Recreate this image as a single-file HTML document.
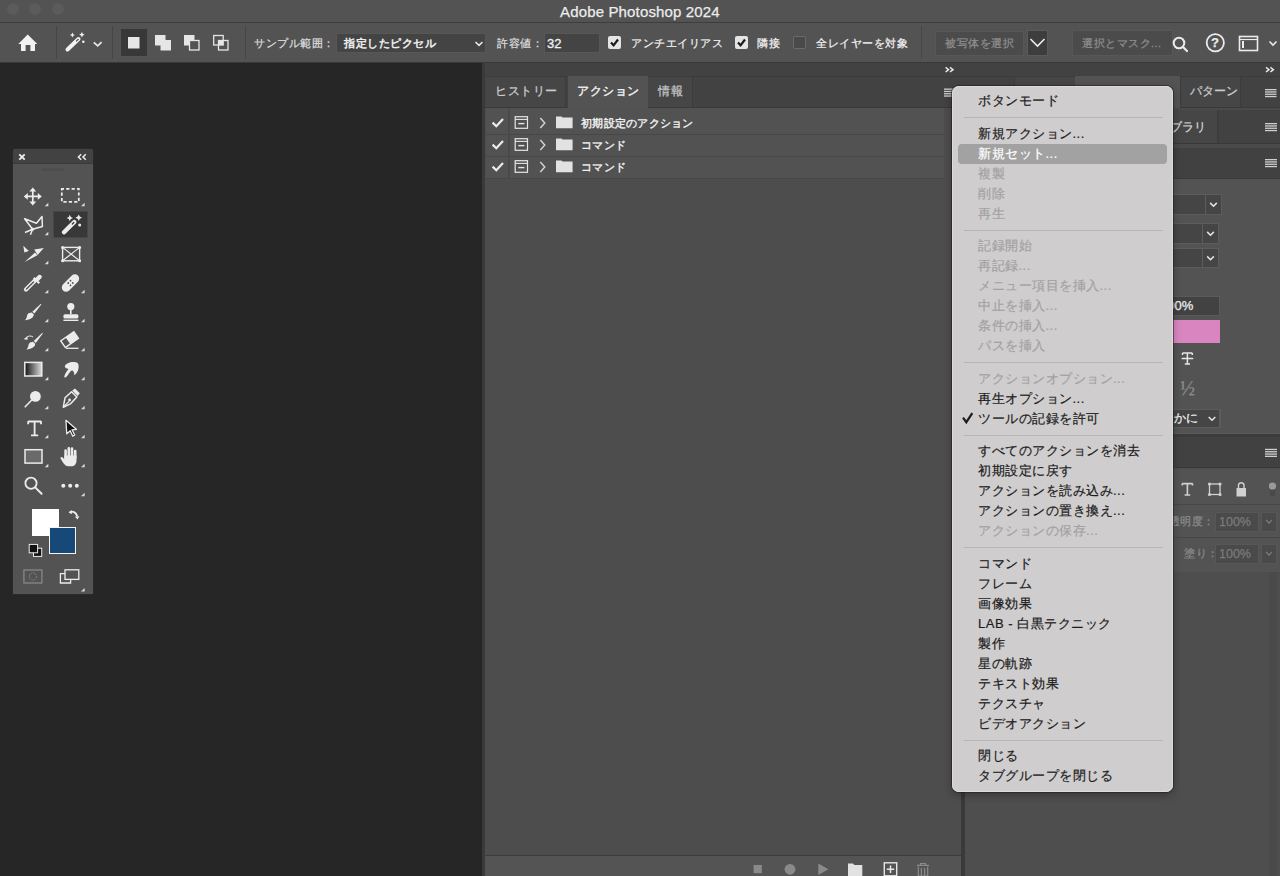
<!DOCTYPE html>
<html><head><meta charset="utf-8">
<style>
*{box-sizing:border-box;margin:0;padding:0}
html,body{width:1280px;height:876px;overflow:hidden;background:#262626;font-family:"Liberation Sans",sans-serif;color:#e6e6e6}
.a{position:absolute}
.t{position:absolute;white-space:nowrap;line-height:1;-webkit-text-stroke:0.25px currentColor}
.mi{left:978px;font-size:13px;letter-spacing:0.5px;-webkit-text-stroke:0.2px currentColor}
svg{position:absolute;overflow:visible}
</style></head><body>

<!-- TITLE BAR -->
<div class="a" style="left:0;top:0;width:1280px;height:23px;background:#535353"></div>
<div class="a" style="left:0;top:22px;width:1280px;height:1px;background:#3d3d3d"></div>
<div class="a" style="left:7px;top:3px;width:12px;height:12px;border-radius:50%;background:#5b5b5b"></div>
<div class="a" style="left:29px;top:3px;width:12px;height:12px;border-radius:50%;background:#5b5b5b"></div>
<div class="a" style="left:52px;top:3px;width:12px;height:12px;border-radius:50%;background:#5b5b5b"></div>
<div class="t" style="left:560px;top:4px;font-size:15px;letter-spacing:0.15px;color:#ececec">Adobe Photoshop 2024</div>

<!-- OPTIONS BAR -->
<div class="a" id="opt" style="left:0;top:23px;width:1280px;height:39px;background:#535353"></div>
<div class="a" style="left:0;top:62px;width:1280px;height:1px;background:#383838"></div>


<!-- options bar content -->
<svg style="left:0;top:0" width="1280" height="62">
 <path d="M27.7 34.5 L18.3 44 L21 44 L21 51 L25.6 51 L25.6 45 L30.4 45 L30.4 51 L35 51 L35 44 L37.3 44 Z" fill="#f2f2f2"/>
 <line x1="56.5" y1="26" x2="56.5" y2="59" stroke="#464646" stroke-width="1"/>
 <line x1="67.5" y1="49.5" x2="78.5" y2="39" stroke="#f2f2f2" stroke-width="4" stroke-linecap="round"/>
 <line x1="76.5" y1="41" x2="78.3" y2="39.3" stroke="#535353" stroke-width="1.2" stroke-linecap="round"/>
 <path d="M72.4 32.5 L73.2 34.2 L74.9 35 L73.2 35.8 L72.4 37.5 L71.6 35.8 L69.9 35 L71.6 34.2Z" fill="#f2f2f2"/>
 <path d="M81.9 32 L82.8 33.8 L84.6 34.7 L82.8 35.6 L81.9 37.4 L81 35.6 L79.2 34.7 L81 33.8Z" fill="#f2f2f2"/>
 <circle cx="83.3" cy="41.7" r="1.3" fill="#f2f2f2"/>
 <polyline points="93.8,42.3 97.7,45.8 101.6,42.1" fill="none" stroke="#e8e8e8" stroke-width="1.8"/>
 <line x1="112.5" y1="26" x2="112.5" y2="59" stroke="#464646" stroke-width="1"/>
 <rect x="121" y="29" width="26" height="27" fill="#383838"/>
 <rect x="128" y="37" width="11.5" height="11.5" fill="#e6e6e6"/>
 <rect x="155" y="35" width="10.5" height="10.5" fill="#e6e6e6"/>
 <rect x="160.5" y="40" width="10.5" height="10.5" fill="#e6e6e6"/>
 <rect x="184" y="35" width="10.5" height="10.5" fill="#e6e6e6"/>
 <rect x="189.5" y="40.5" width="9.5" height="9.5" fill="#535353" stroke="#e6e6e6" stroke-width="1.3"/>
 <rect x="213.7" y="35.5" width="9.5" height="9.5" fill="none" stroke="#e6e6e6" stroke-width="1.3"/>
 <rect x="218.5" y="40.5" width="9.5" height="9.5" fill="none" stroke="#e6e6e6" stroke-width="1.3"/>
 <rect x="218.5" y="40.5" width="4.7" height="4.5" fill="#e6e6e6"/>
 <line x1="245.5" y1="26" x2="245.5" y2="59" stroke="#464646" stroke-width="1"/>
 <line x1="921.5" y1="26" x2="921.5" y2="59" stroke="#464646" stroke-width="1"/>
</svg>
<div class="t" style="left:254px;top:38px;font-size:11px;letter-spacing:0.5px;color:#dcdcdc">サンプル範囲：</div>
<div class="a" style="left:336px;top:33px;width:150px;height:20px;background:#444;border:1px solid #575757"></div>
<div class="t" style="left:344px;top:38px;font-size:11px;letter-spacing:0.5px;color:#f0f0f0;-webkit-text-stroke:0.5px currentColor">指定したピクセル</div>
<svg style="left:0;top:0" width="1" height="1"><polyline points="475.5,42 479,45.3 482.5,42" fill="none" stroke="#e8e8e8" stroke-width="1.6"/></svg>
<div class="t" style="left:497px;top:38px;font-size:11px;letter-spacing:0.5px;color:#dcdcdc">許容値：</div>
<div class="a" style="left:544px;top:33px;width:56px;height:20px;background:#444;border:1px solid #575757"></div>
<div class="t" style="left:547px;top:37px;font-size:13px;color:#f2f2f2;-webkit-text-stroke:0.3px currentColor">32</div>
<div class="a" style="left:608px;top:36px;width:13px;height:13px;background:#e4e4e4;border-radius:2px"></div>
<svg style="left:0;top:0" width="1" height="1"><polyline points="611,42.5 613.6,45.3 618,39.5" fill="none" stroke="#1a1a1a" stroke-width="2.2"/></svg>
<div class="t" style="left:631px;top:38px;font-size:11px;letter-spacing:0.5px;color:#f0f0f0">アンチエイリアス</div>
<div class="a" style="left:735px;top:36px;width:13px;height:13px;background:#e4e4e4;border-radius:2px"></div>
<svg style="left:0;top:0" width="1" height="1"><polyline points="738,42.5 740.6,45.3 745,39.5" fill="none" stroke="#1a1a1a" stroke-width="2.2"/></svg>
<div class="t" style="left:757px;top:38px;font-size:11px;letter-spacing:0.5px;color:#f0f0f0">隣接</div>
<div class="a" style="left:793px;top:36px;width:13px;height:13px;background:#4a4a4a;border:1px solid #6a6a6a;border-radius:2px"></div>
<div class="t" style="left:816px;top:38px;font-size:11px;letter-spacing:0.5px;color:#f0f0f0">全レイヤーを対象</div>
<div class="a" style="left:935px;top:31px;width:89px;height:25px;background:#4b4b4b;border:1px solid #575757"></div>
<div class="t" style="left:945px;top:38px;font-size:11px;letter-spacing:0.5px;color:#8e8e8e">被写体を選択</div>
<div class="a" style="left:1027px;top:30px;width:21px;height:26px;background:#3d3d3d;border:1px solid #5a5a5a"></div>
<svg style="left:0;top:0" width="1" height="1"><polyline points="1030.5,39 1037.5,46 1044.5,39" fill="none" stroke="#ececec" stroke-width="1.6"/></svg>
<div class="a" style="left:1072px;top:30px;width:101px;height:26px;background:#4b4b4b;border:1px solid #575757"></div>
<div class="t" style="left:1082px;top:38px;font-size:11px;letter-spacing:0.5px;color:#8e8e8e">選択とマスク...</div>
<svg style="left:0;top:0" width="1" height="1">
 <circle cx="1179" cy="43" r="5.3" fill="none" stroke="#ececec" stroke-width="2"/>
 <line x1="1183" y1="47" x2="1187" y2="51" stroke="#ececec" stroke-width="2.2" stroke-linecap="round"/>
 <circle cx="1215.3" cy="42.8" r="8.6" fill="none" stroke="#ececec" stroke-width="1.8"/>
 <rect x="1239.5" y="36.5" width="18" height="14" fill="none" stroke="#ececec" stroke-width="1.6"/>
 <line x1="1239.5" y1="39.5" x2="1257.5" y2="39.5" stroke="#ececec" stroke-width="1.2"/>
 <line x1="1243" y1="41" x2="1243" y2="48" stroke="#ececec" stroke-width="2"/>
 <polyline points="1269.5,41.5 1273,45 1276.5,41.5" fill="none" stroke="#e8e8e8" stroke-width="1.6"/>
</svg>
<div class="t" style="left:1211px;top:36px;font-size:13px;color:#ececec;font-weight:bold">?</div>

<!-- CANVAS AREA -->
<div class="a" style="left:0;top:63px;width:482px;height:813px;background:#262626"></div>

<!-- TOOLBAR -->
<div class="a" style="left:13px;top:149px;width:80px;height:445px;background:#535353;border-radius:3px 3px 0 0;box-shadow:0 0 0 1px #2a2a2a"></div>
<div class="a" style="left:13px;top:149px;width:80px;height:14px;background:#424242;border-radius:3px 3px 0 0"></div>
<div class="a" style="left:13px;top:163px;width:80px;height:1px;background:#3a3a3a"></div>
<svg style="left:0;top:0" width="1" height="1">
<path d="M19.3 154.3 L24.7 159.7 M24.7 154.3 L19.3 159.7" stroke="#ececec" stroke-width="1.9"/>
<path d="M81.2 154.2 L78.4 157 L81.2 159.8 M85.8 154.2 L83 157 L85.8 159.8" fill="none" stroke="#ececec" stroke-width="1.5"/>
<rect x="42" y="168.5" width="22" height="2.5" fill="#4d4d4d"/>
<path d="M48.3 206.3 L48.3 202.70000000000002 L44.699999999999996 206.3Z" fill="#dcdcdc"/>
<path d="M84.6 206.3 L84.6 202.70000000000002 L81.0 206.3Z" fill="#dcdcdc"/>
<path d="M48.3 235.3 L48.3 231.70000000000002 L44.699999999999996 235.3Z" fill="#dcdcdc"/>
<path d="M84.6 235.3 L84.6 231.70000000000002 L81.0 235.3Z" fill="#dcdcdc"/>
<path d="M48.3 264.3 L48.3 260.7 L44.699999999999996 264.3Z" fill="#dcdcdc"/>
<path d="M48.3 293.3 L48.3 289.7 L44.699999999999996 293.3Z" fill="#dcdcdc"/>
<path d="M84.6 293.3 L84.6 289.7 L81.0 293.3Z" fill="#dcdcdc"/>
<path d="M48.3 322.3 L48.3 318.7 L44.699999999999996 322.3Z" fill="#dcdcdc"/>
<path d="M84.6 322.3 L84.6 318.7 L81.0 322.3Z" fill="#dcdcdc"/>
<path d="M48.3 351.3 L48.3 347.7 L44.699999999999996 351.3Z" fill="#dcdcdc"/>
<path d="M84.6 351.3 L84.6 347.7 L81.0 351.3Z" fill="#dcdcdc"/>
<path d="M48.3 380.3 L48.3 376.7 L44.699999999999996 380.3Z" fill="#dcdcdc"/>
<path d="M84.6 380.3 L84.6 376.7 L81.0 380.3Z" fill="#dcdcdc"/>
<path d="M48.3 409.3 L48.3 405.7 L44.699999999999996 409.3Z" fill="#dcdcdc"/>
<path d="M84.6 409.3 L84.6 405.7 L81.0 409.3Z" fill="#dcdcdc"/>
<path d="M48.3 438.3 L48.3 434.7 L44.699999999999996 438.3Z" fill="#dcdcdc"/>
<path d="M84.6 438.3 L84.6 434.7 L81.0 438.3Z" fill="#dcdcdc"/>
<path d="M48.3 467.3 L48.3 463.7 L44.699999999999996 467.3Z" fill="#dcdcdc"/>
<path d="M84.6 467.3 L84.6 463.7 L81.0 467.3Z" fill="#dcdcdc"/>
<path d="M84.6 496.3 L84.6 492.7 L81.0 496.3Z" fill="#dcdcdc"/>
<path d="M84.6 591.5 L84.6 587.9 L81.0 591.5Z" fill="#dcdcdc"/>
<path d="M32.8 189 V203.8 M25.4 196.4 H40.2" stroke="#ececec" stroke-width="1.7"/>
<path d="M32.8 187.4 L36.2 191.4 H29.4Z M32.8 205.4 L36.2 201.4 H29.4Z M23.8 196.4 L27.8 193 V199.8Z M41.8 196.4 L37.8 193 V199.8Z" fill="#ececec"/>
<rect x="61.8" y="188.8" width="17" height="13" fill="none" stroke="#ececec" stroke-width="1.8" stroke-dasharray="3.2 2.2" stroke-dashoffset="1"/>
<path d="M24.6 218.7 L36.5 223.2 L42 216.6 L42.4 226.5 L32.6 229.3 Z" fill="none" stroke="#ececec" stroke-width="1.5" stroke-linejoin="round"/>
<path d="M32.6 229.3 L25 232.5 M32.6 229.3 L30.4 234.8" stroke="#ececec" stroke-width="1.5"/>
<circle cx="32.4" cy="229.3" r="1.7" fill="#ececec"/>
</svg>
<div class="a" style="left:53px;top:211px;width:35px;height:27px;background:#383838;box-shadow:inset 0 0 0 1px #474747"></div>
<svg style="left:0;top:0" width="1" height="1">
<line x1="64" y1="232.3" x2="74.3" y2="222" stroke="#ececec" stroke-width="4.4" stroke-linecap="round"/>
<line x1="72.3" y1="224" x2="73.8" y2="222.5" stroke="#383838" stroke-width="1.3" stroke-linecap="round"/>
<path d="M69.8 214.8 L70.8 217 L73 218 L70.8 219 L69.8 221.2 L68.8 219 L66.6 218 L68.8 217Z M78.7 214.4 L79.8 216.6 L82 217.7 L79.8 218.8 L78.7 221 L77.6 218.8 L75.4 217.7 L77.6 216.6Z" fill="#ececec"/>
<circle cx="79.7" cy="224.9" r="1.5" fill="#ececec"/>
<path d="M23.3 245.8 L28.8 251 L24.4 252.6Z" fill="#ececec"/>
<path d="M24.6 262 L35 252.6 L37.4 255.3Z" fill="#ececec"/>
<path d="M34.2 249.6 L43.8 247.9 L37.6 254.9Z" fill="#ececec"/>
<rect x="62.6" y="247.4" width="17" height="13.4" fill="none" stroke="#ececec" stroke-width="1.4"/>
<path d="M62.6 247.4 L79.6 260.8 M79.6 247.4 L62.6 260.8" stroke="#ececec" stroke-width="1.2"/>
<circle cx="62.6" cy="247.4" r="1.5" fill="#ececec"/>
<circle cx="79.6" cy="247.4" r="1.5" fill="#ececec"/>
<circle cx="62.6" cy="260.8" r="1.5" fill="#ececec"/>
<circle cx="79.6" cy="260.8" r="1.5" fill="#ececec"/>
<line x1="26" y1="289.5" x2="34.5" y2="281" stroke="#ececec" stroke-width="4.2" stroke-linecap="round"/>
<line x1="26.5" y1="289" x2="33.5" y2="282" stroke="#535353" stroke-width="1.4" stroke-linecap="round"/>
<path d="M33 278.5 L38.5 284 L40 282.5 L38.5 281 L41.5 278 A2.2 2.2 0 0 0 38.5 275 L35.5 278 L34.5 277Z" fill="#ececec"/>
<g transform="translate(70.5 283) rotate(-45)"><rect x="-10.5" y="-4.3" width="21" height="8.6" rx="4.3" fill="#ececec"/><circle cx="-1.6" cy="-1.6" r=".9" fill="#535353"/><circle cx="1.6" cy="-1.6" r=".9" fill="#535353"/><circle cx="-1.6" cy="1.6" r=".9" fill="#535353"/><circle cx="1.6" cy="1.6" r=".9" fill="#535353"/></g>
<path d="M40.9 303.8 L41.3 304.4 L34.4 313.6 L32.3 311.8Z" fill="#ececec"/>
<path d="M31.7 312.4 L33.8 314.3 C33.8 317.5 30.5 319.8 24.8 320.3 C27.5 318.5 26.3 315 28.5 313.3 Z" fill="#ececec"/>
<circle cx="70.8" cy="306.6" r="3.6" fill="#ececec"/>
<rect x="70" y="309" width="1.6" height="5" fill="#ececec"/>
<rect x="63.4" y="314.2" width="15" height="4.4" rx="1.6" fill="#ececec"/>
<rect x="63.4" y="319.6" width="15" height="1.4" fill="#ececec"/>
<path d="M42.4 332.8 L42.8 333.4 L35.8 343 L33.7 341.1Z" fill="#ececec"/>
<path d="M33 341.8 L35.2 343.7 C35.2 346.8 32 349 26.3 349.5 C29 347.7 27.8 344.3 30 342.6 Z" fill="#ececec"/>
<path d="M23.6 339.3 L27.4 336.2 L27.6 339.8Z" fill="#ececec"/>
<path d="M26 337.8 C28 335.6 31 335.5 33 337" fill="none" stroke="#ececec" stroke-width="1"/>
<g transform="translate(69.6 339.6) rotate(-35)"><rect x="-8" y="-4" width="16" height="8" fill="none" stroke="#ececec" stroke-width="1.4"/><rect x="-2" y="-4" width="10" height="8" fill="#ececec"/></g>
<line x1="66" y1="348.3" x2="78.5" y2="348.3" stroke="#ececec" stroke-width="1.3"/>
<defs><linearGradient id="gr" x1="0" x2="1"><stop offset="0" stop-color="#111"/><stop offset="1" stop-color="#ddd"/></linearGradient></defs>
<rect x="24.8" y="362.4" width="17" height="13.6" fill="url(#gr)" stroke="#ececec" stroke-width="1.5"/>
<path d="M64.6 377.4 C63.5 376.5 66 372 68.5 369 C66.5 368.5 64.5 367.5 64.8 366 C66 363.5 70 361.6 74.5 362 C78 362.3 79 364 78.6 367.5 C78.3 371 76.8 373.5 74.3 375.3 C74.3 372.4 73.2 370.4 71.8 370.6 C69.6 371.2 66.8 378.6 64.6 377.4Z" fill="#ececec"/>
<circle cx="35.4" cy="396.4" r="5.4" fill="#ececec"/>
<line x1="31.3" y1="400.5" x2="25.2" y2="406.8" stroke="#ececec" stroke-width="1.6" stroke-linecap="round"/>
<path d="M63.3 407.2 L65 397.8 L71.6 391.8 L76.8 397 L70.8 403.6 Z" fill="none" stroke="#ececec" stroke-width="1.5" stroke-linejoin="round"/>
<path d="M72.2 390.6 L75 388.4 L79.8 393.2 L77.6 396Z" fill="#ececec"/>
<line x1="63.6" y1="406.8" x2="69" y2="401.4" stroke="#ececec" stroke-width="1.2"/>
<circle cx="69.6" cy="400" r="1.4" fill="#ececec"/>
<path d="M28.2 421.5 H41 M28.2 421 V424.2 M41 421 V424.2 M34.6 421.5 V435.2 M31 435.3 H38.2" fill="none" stroke="#ececec" stroke-width="1.8"/>
<path d="M65.9 420.3 L76.4 429.3 L72 429.8 L74.7 435 L72.8 436.2 L70.2 430.8 L66.8 433.8Z" fill="#111" stroke="#ececec" stroke-width="1.3" stroke-linejoin="round"/>
<rect x="25" y="449.7" width="17" height="13.4" fill="#6a6a6a" stroke="#ececec" stroke-width="1.5"/>
<path d="M65.6 458 V450.5 M68.8 457 V448.3 M72 457 V448.5 M75.2 458 V451" stroke="#ececec" stroke-width="2.6" stroke-linecap="round"/><path d="M64.3 455.5 H76.5 V460.5 C76.5 464 74.5 466.3 71 466.3 H68.5 C66.3 466.3 64.8 465 63.3 463 L60.6 458.6 C60 457.5 61.4 456.5 62.3 457.3 L64.3 459.2Z" fill="#ececec"/>
<circle cx="31" cy="483.2" r="5.6" fill="none" stroke="#ececec" stroke-width="1.8"/>
<line x1="35.2" y1="487.4" x2="41.6" y2="493.8" stroke="#ececec" stroke-width="2" stroke-linecap="round"/>
<circle cx="63.3" cy="485.8" r="2" fill="#ececec"/>
<circle cx="70.2" cy="485.8" r="2" fill="#ececec"/>
<circle cx="76.8" cy="485.8" r="2" fill="#ececec"/>
</svg>
<div class="a" style="left:32px;top:509px;width:27px;height:27px;background:#fff"></div>
<div class="a" style="left:49px;top:527px;width:27px;height:27px;background:#174978;border:1px solid #f4f4f4"></div>
<svg style="left:0;top:0" width="1" height="1">
<path d="M69.8 512.2 C72.5 510.8 76 512 77.3 516.3" fill="none" stroke="#ececec" stroke-width="1.8"/>
<path d="M68.6 512.5 L71.6 509.9 L71.8 514.3Z M77.5 519.5 L74.8 516.4 L79.4 516.2Z" fill="#ececec"/>
<rect x="33.5" y="548.2" width="8.2" height="8.2" fill="#111" stroke="#ececec" stroke-width="1"/>
<rect x="29.2" y="544.4" width="8.4" height="8.4" fill="#111" stroke="#ececec" stroke-width="1"/>
<rect x="23.9" y="570" width="18" height="13" fill="none" stroke="#8c8c8c" stroke-width="1.2"/>
<circle cx="32.9" cy="576.5" r="3.6" fill="none" stroke="#8c8c8c" stroke-width="1" stroke-dasharray="1.4 1"/>
<rect x="65" y="569.8" width="13.8" height="9.6" fill="#535353" stroke="#ececec" stroke-width="1.3"/>
<path d="M65 573.6 H60.4 V583 H70.6 V579.4" fill="none" stroke="#ececec" stroke-width="1.3"/>
</svg>
<!-- ACTIONS PANEL -->
<div class="a" style="left:482px;top:63px;width:798px;height:13px;background:#424242"></div>
<div class="a" style="left:482px;top:63px;width:3px;height:813px;background:#3a3a3a"></div>
<div class="a" style="left:485px;top:76px;width:480px;height:31px;background:#424242;border-top:1px solid #3b3b3b"></div>
<div class="a" style="left:486px;top:77px;width:80px;height:30px;background:#464646;border-right:1px solid #3c3c3c"></div>
<div class="a" style="left:648px;top:77px;width:45px;height:30px;background:#464646;border-right:1px solid #3c3c3c"></div>
<div class="a" style="left:485px;top:107px;width:480px;height:1px;background:#393939"></div>
<div class="a" style="left:485px;top:108px;width:476px;height:747px;background:#4d4d4d"></div>
<div class="a" style="left:568px;top:76px;width:80px;height:32px;background:#535353"></div>
<div class="t" style="left:495px;top:85px;font-size:12px;letter-spacing:0.5px;color:#cdcdcd">ヒストリー</div>
<div class="t" style="left:577px;top:85px;font-size:12px;letter-spacing:0.5px;-webkit-text-stroke:0.4px currentColor;color:#f2f2f2">アクション</div>
<div class="t" style="left:658px;top:85px;font-size:12px;letter-spacing:1px;color:#c6c6c6">情報</div>
<div class="a" style="left:486px;top:108px;width:458px;height:71px;background:#525252"></div>
<div class="a" style="left:486px;top:134px;width:458px;height:1px;background:#474747"></div>
<div class="a" style="left:486px;top:156px;width:458px;height:1px;background:#474747"></div>
<div class="a" style="left:486px;top:178px;width:458px;height:1px;background:#474747"></div>
<div class="a" style="left:508px;top:108px;width:2px;height:71px;background:#4a4a4a"></div>

<svg style="left:0;top:0" width="1" height="1">
<polyline points="492.6,122.6 496.3,126.2 503,119" fill="none" stroke="#ececec" stroke-width="2.2"/>
<rect x="515.2" y="116.7" width="12.3" height="11.6" fill="none" stroke="#e6e6e6" stroke-width="1.2"/>
<line x1="515.2" y1="119.4" x2="527.5" y2="119.4" stroke="#e6e6e6" stroke-width="1.1"/>
<line x1="518.3" y1="123.6" x2="524.4" y2="123.6" stroke="#e6e6e6" stroke-width="1.4"/>
<polyline points="540.3,118 544.8,123 540.3,128" fill="none" stroke="#d6d6d6" stroke-width="1.4"/>
<path d="M556 116.4 H561.5 L562.5 117.4 H572.6 V128.2 H556Z" fill="#e2e2e2"/>
<polyline points="492.6,144.6 496.3,148.2 503,141" fill="none" stroke="#ececec" stroke-width="2.2"/>
<rect x="515.2" y="138.7" width="12.3" height="11.6" fill="none" stroke="#e6e6e6" stroke-width="1.2"/>
<line x1="515.2" y1="141.4" x2="527.5" y2="141.4" stroke="#e6e6e6" stroke-width="1.1"/>
<line x1="518.3" y1="145.6" x2="524.4" y2="145.6" stroke="#e6e6e6" stroke-width="1.4"/>
<polyline points="540.3,140 544.8,145 540.3,150" fill="none" stroke="#d6d6d6" stroke-width="1.4"/>
<path d="M556 138.4 H561.5 L562.5 139.4 H572.6 V150.2 H556Z" fill="#e2e2e2"/>
<polyline points="492.6,166.6 496.3,170.2 503,163" fill="none" stroke="#ececec" stroke-width="2.2"/>
<rect x="515.2" y="160.7" width="12.3" height="11.6" fill="none" stroke="#e6e6e6" stroke-width="1.2"/>
<line x1="515.2" y1="163.4" x2="527.5" y2="163.4" stroke="#e6e6e6" stroke-width="1.1"/>
<line x1="518.3" y1="167.6" x2="524.4" y2="167.6" stroke="#e6e6e6" stroke-width="1.4"/>
<polyline points="540.3,162 544.8,167 540.3,172" fill="none" stroke="#d6d6d6" stroke-width="1.4"/>
<path d="M556 160.4 H561.5 L562.5 161.4 H572.6 V172.2 H556Z" fill="#e2e2e2"/>
<path d="M945.6 67.4 L948.6 69.7 L945.6 72.0 M950.0 67.4 L953.0 69.7 L950.0 72.0" fill="none" stroke="#e8e8e8" stroke-width="1.5"/>
<rect x="944" y="88.5" width="9" height="1.3" fill="#cfcfcf"/><rect x="944" y="90.8" width="9" height="1.3" fill="#cfcfcf"/><rect x="944" y="93.1" width="9" height="1.3" fill="#cfcfcf"/><rect x="944" y="95.4" width="9" height="1.3" fill="#cfcfcf"/>
</svg>
<div class="t" style="left:581px;top:118px;font-size:11px;color:#f0f0f0;letter-spacing:0.25px;-webkit-text-stroke:0.4px currentColor">初期設定のアクション</div>
<div class="t" style="left:581px;top:140px;font-size:11px;color:#f0f0f0;letter-spacing:0.25px;-webkit-text-stroke:0.4px currentColor">コマンド</div>
<div class="t" style="left:581px;top:162px;font-size:11px;color:#f0f0f0;letter-spacing:0.25px;-webkit-text-stroke:0.4px currentColor">コマンド</div>
<div class="a" style="left:485px;top:855px;width:476px;height:1px;background:#3c3c3c"></div>
<div class="a" style="left:485px;top:856px;width:476px;height:20px;background:#545454"></div>
<svg style="left:0;top:0" width="1" height="1">
<rect x="753.6" y="865" width="8.2" height="8.2" fill="#8a8a8a"/>
<circle cx="790" cy="869.3" r="5.4" fill="#8a8a8a"/>
<path d="M818.3 863.6 L828.4 869.3 L818.3 875Z" fill="#8a8a8a"/>
<path d="M848 863.4 H853 L854.3 865 H862.3 V876 H848Z" fill="#e2e2e2"/>
<rect x="884.3" y="862.8" width="12.4" height="13" fill="none" stroke="#e6e6e6" stroke-width="1.4"/>
<path d="M890.5 865.6 V873 M886.8 869.3 H894.2" stroke="#e6e6e6" stroke-width="1.5"/>
<path d="M917 865.3 H929 M920.5 865.3 V863.5 H925.5 V865.3 M918.3 866.5 V876 H927.7 V866.5 M921.4 868 V876 M924.6 868 V876" fill="none" stroke="#8a8a8a" stroke-width="1.2"/>
</svg>
<div class="a" style="left:961px;top:108px;width:4px;height:768px;background:#3a3a3a"></div>
<div class="a" style="left:965px;top:76px;width:315px;height:800px;background:#4e4e4e"></div>
<div class="a" style="left:1269px;top:572px;width:8px;height:304px;background:#4a4a4a"></div>
<div class="a" style="left:965px;top:76px;width:315px;height:32px;background:#424242;border-top:1px solid #3b3b3b;border-bottom:1px solid #393939"></div>
<div class="a" style="left:1014px;top:77px;width:61px;height:30px;background:#464646;border-left:1px solid #3c3c3c"></div>
<div class="a" style="left:1075px;top:76px;width:105px;height:32px;background:#535353"></div>
<div class="a" style="left:1180px;top:77px;width:61px;height:30px;background:#464646;border-left:1px solid #3c3c3c;border-right:1px solid #3c3c3c"></div>
<div class="t" style="left:1090px;top:85px;font-size:12px;color:#f0f0f0">スウォッチ</div>
<div class="t" style="left:1190px;top:85px;font-size:12px;color:#cdcdcd">パターン</div>
<div class="a" style="left:965px;top:108px;width:315px;height:2px;background:#4a4a4a"></div>
<div class="a" style="left:965px;top:110px;width:315px;height:34px;background:#424242;border-bottom:1px solid #393939"></div>
<div class="a" style="left:1080px;top:110px;width:139px;height:33px;background:#464646;border-right:2px solid #3c3c3c"></div>
<div class="t" style="left:1146px;top:121px;font-size:12px;color:#d6d6d6">ライブラリ</div>
<div class="a" style="left:965px;top:144px;width:315px;height:4px;background:#4a4a4a"></div>
<div class="a" style="left:965px;top:148px;width:315px;height:31px;background:#414141;border-bottom:1px solid #393939"></div>
<div class="a" style="left:965px;top:179px;width:315px;height:255px;background:#535353"></div>
<div class="a" style="left:1100px;top:194px;width:122px;height:21px;background:#454545;border:1px solid #5c5c5c"></div><div class="a" style="left:1205px;top:194px;width:1px;height:21px;background:#5c5c5c"></div>
<div class="a" style="left:1100px;top:223px;width:119px;height:21px;background:#454545;border:1px solid #5c5c5c"></div><div class="a" style="left:1202px;top:223px;width:1px;height:21px;background:#5c5c5c"></div>
<div class="a" style="left:1100px;top:248px;width:119px;height:20px;background:#454545;border:1px solid #5c5c5c"></div><div class="a" style="left:1202px;top:248px;width:1px;height:20px;background:#5c5c5c"></div>
<div class="a" style="left:1100px;top:296px;width:120px;height:20px;background:#424242;border:1px solid #5a5a5a"></div>
<div class="t" style="left:1160px;top:299px;font-size:13px;color:#f0f0f0">100%</div>
<div class="a" style="left:1100px;top:320px;width:120px;height:23px;background:#d986c0"></div>
<div class="a" style="left:1100px;top:409px;width:120px;height:19px;background:#454545;border:1px solid #5c5c5c"></div><div class="a" style="left:1220px;top:409px;width:1px;height:19px;background:#5c5c5c"></div>
<div class="t" style="left:1138px;top:412px;font-size:12px;color:#f0f0f0">なめらかに</div>
<svg style="left:0;top:0" width="1" height="1">
<polyline points="1210.2,202.9 1213.5,206.2 1216.8,202.9" fill="none" stroke="#e6e6e6" stroke-width="1.5"/>
<polyline points="1207.2,231.9 1210.5,235.2 1213.8,231.9" fill="none" stroke="#e6e6e6" stroke-width="1.5"/>
<polyline points="1207.2,256.4 1210.5,259.7 1213.8,256.4" fill="none" stroke="#e6e6e6" stroke-width="1.5"/>
<polyline points="1208.7,417 1212,420.3 1215.3,417" fill="none" stroke="#e6e6e6" stroke-width="1.5"/>
<path d="M1182.5 353 H1192.3 M1182.5 353 V355 M1192.3 353 V355 M1187.4 353 V364 M1184.8 364 H1190 M1181.6 358.6 H1193.2" fill="none" stroke="#e6e6e6" stroke-width="1.5"/>
</svg>
<div class="t" style="left:1180px;top:378px;font-size:20px;color:#8c8c8c;font-family:'Liberation Serif',serif">½</div>
<div class="a" style="left:965px;top:433px;width:315px;height:1px;background:#5a5a5a"></div>
<div class="a" style="left:965px;top:434px;width:315px;height:3px;background:#3b3b3b"></div>
<div class="a" style="left:965px;top:437px;width:315px;height:31px;background:#414141;border-bottom:1px solid #393939"></div>
<div class="a" style="left:965px;top:469px;width:315px;height:103px;background:#535353"></div>
<div class="a" style="left:965px;top:504px;width:315px;height:1px;background:#474747"></div>
<div class="a" style="left:965px;top:537px;width:315px;height:1px;background:#474747"></div>
<div class="a" style="left:1215px;top:512px;width:44px;height:20px;background:#4a4a4a;border:1px solid #575757"></div>
<div class="a" style="left:1261px;top:512px;width:16px;height:20px;background:#4a4a4a;border:1px solid #575757"></div>
<div class="a" style="left:1215px;top:544px;width:44px;height:20px;background:#4a4a4a;border:1px solid #575757"></div>
<div class="a" style="left:1261px;top:544px;width:16px;height:20px;background:#4a4a4a;border:1px solid #575757"></div>
<div class="t" style="left:1219px;top:516px;font-size:12.5px;color:#7a7a7a">100%</div>
<div class="t" style="left:1219px;top:548px;font-size:12.5px;color:#7a7a7a">100%</div>
<div class="t" style="left:1157px;top:516px;font-size:11px;color:#8a8a8a;letter-spacing:0.5px">不透明度：</div>
<div class="t" style="left:1184px;top:548px;font-size:11px;color:#8a8a8a;letter-spacing:0.5px">塗り：</div>
<svg style="left:0;top:0" width="1" height="1">
<rect x="1265" y="448.8" width="12" height="1.3" fill="#cfcfcf"/><rect x="1265" y="451.1" width="12" height="1.3" fill="#cfcfcf"/><rect x="1265" y="453.4" width="12" height="1.3" fill="#cfcfcf"/><rect x="1265" y="455.7" width="12" height="1.3" fill="#cfcfcf"/>
<rect x="1265" y="123.0" width="12" height="1.3" fill="#cfcfcf"/><rect x="1265" y="125.3" width="12" height="1.3" fill="#cfcfcf"/><rect x="1265" y="127.6" width="12" height="1.3" fill="#cfcfcf"/><rect x="1265" y="129.9" width="12" height="1.3" fill="#cfcfcf"/>
<rect x="1265" y="159.0" width="12" height="1.3" fill="#cfcfcf"/><rect x="1265" y="161.3" width="12" height="1.3" fill="#cfcfcf"/><rect x="1265" y="163.6" width="12" height="1.3" fill="#cfcfcf"/><rect x="1265" y="165.9" width="12" height="1.3" fill="#cfcfcf"/>
<rect x="1265" y="89.0" width="11.5" height="1.3" fill="#cfcfcf"/><rect x="1265" y="91.3" width="11.5" height="1.3" fill="#cfcfcf"/><rect x="1265" y="93.6" width="11.5" height="1.3" fill="#cfcfcf"/><rect x="1265" y="95.9" width="11.5" height="1.3" fill="#cfcfcf"/>
<path d="M1266 67.4 L1269 69.7 L1266 72.0 M1270.4 67.4 L1273.4 69.7 L1270.4 72.0" fill="none" stroke="#e8e8e8" stroke-width="1.5"/>
<polyline points="1266,520 1269,523 1272,520" fill="none" stroke="#7a7a7a" stroke-width="1.3"/>
<polyline points="1266,552 1269,555 1272,552" fill="none" stroke="#7a7a7a" stroke-width="1.3"/>
<path d="M1182.3 483.6 H1192.5 M1182.3 483.3 V485.6 M1192.5 483.3 V485.6 M1187.4 483.6 V495 M1184.6 495 H1190.2" fill="none" stroke="#d0d0d0" stroke-width="1.6"/>
<rect x="1209.5" y="484" width="10.5" height="10.5" fill="none" stroke="#d0d0d0" stroke-width="1.3"/>
<circle cx="1209.5" cy="484" r="1.6" fill="#d0d0d0"/>
<circle cx="1220" cy="484" r="1.6" fill="#d0d0d0"/>
<circle cx="1209.5" cy="494.5" r="1.6" fill="#d0d0d0"/>
<circle cx="1220" cy="494.5" r="1.6" fill="#d0d0d0"/>
<path d="M1236.5 488 H1246 V496.5 H1236.5Z" fill="#d0d0d0"/><path d="M1238.5 488 V485 A2.8 2.8 0 0 1 1244 485 V488" fill="none" stroke="#d0d0d0" stroke-width="1.4"/>
<circle cx="1272.5" cy="486" r="3.6" fill="#9a9a9a"/><rect x="1270" y="490" width="5" height="6" fill="#4a4a4a"/>
</svg>
<!-- MENU -->
<div class="a" id="menu" style="left:952px;top:86px;width:221px;height:706px;border-radius:7px;background:#cfcdcd;box-shadow:inset 0 0 0 1px #dddbdb,0 0 0 1px rgba(30,30,30,.55),0 3px 8px rgba(0,0,0,.3)"></div>
<div class="t mi" style="top:94.0px;color:#1c1c1c">ボタンモード</div>
<div class="a" style="left:964px;top:117.0px;width:199px;height:1px;background:#b6b4b4"></div>
<div class="t mi" style="top:126.5px;color:#1c1c1c">新規アクション...</div>
<div class="a" style="left:958px;top:144.0px;width:209px;height:20px;border-radius:4px;background:#a3a2a2"></div>
<div class="t mi" style="top:146.5px;color:#ffffff">新規セット...</div>
<div class="t mi" style="top:166.5px;color:#a3a2a2">複製</div>
<div class="t mi" style="top:186.5px;color:#a3a2a2">削除</div>
<div class="t mi" style="top:206.5px;color:#a3a2a2">再生</div>
<div class="a" style="left:964px;top:229.5px;width:199px;height:1px;background:#b6b4b4"></div>
<div class="t mi" style="top:239.0px;color:#a3a2a2">記録開始</div>
<div class="t mi" style="top:259.0px;color:#a3a2a2">再記録...</div>
<div class="t mi" style="top:279.0px;color:#a3a2a2">メニュー項目を挿入...</div>
<div class="t mi" style="top:299.0px;color:#a3a2a2">中止を挿入...</div>
<div class="t mi" style="top:319.0px;color:#a3a2a2">条件の挿入...</div>
<div class="t mi" style="top:339.0px;color:#a3a2a2">パスを挿入</div>
<div class="a" style="left:964px;top:362.0px;width:199px;height:1px;background:#b6b4b4"></div>
<div class="t mi" style="top:371.5px;color:#a3a2a2">アクションオプション...</div>
<div class="t mi" style="top:391.5px;color:#1c1c1c">再生オプション...</div>
<div class="t mi" style="top:411.5px;color:#1c1c1c">ツールの記録を許可</div>
<svg style="left:0;top:0" width="1" height="1"><polyline points="963,417.6 966.3,422.2 972.3,413.2" fill="none" stroke="#1c1c1c" stroke-width="2.2"/></svg>
<div class="a" style="left:964px;top:434.5px;width:199px;height:1px;background:#b6b4b4"></div>
<div class="t mi" style="top:444.0px;color:#1c1c1c">すべてのアクションを消去</div>
<div class="t mi" style="top:464.0px;color:#1c1c1c">初期設定に戻す</div>
<div class="t mi" style="top:484.0px;color:#1c1c1c">アクションを読み込み...</div>
<div class="t mi" style="top:504.0px;color:#1c1c1c">アクションの置き換え...</div>
<div class="t mi" style="top:524.0px;color:#a3a2a2">アクションの保存...</div>
<div class="a" style="left:964px;top:547.0px;width:199px;height:1px;background:#b6b4b4"></div>
<div class="t mi" style="top:556.5px;color:#1c1c1c">コマンド</div>
<div class="t mi" style="top:576.5px;color:#1c1c1c">フレーム</div>
<div class="t mi" style="top:596.5px;color:#1c1c1c">画像効果</div>
<div class="t mi" style="top:616.5px;color:#1c1c1c">LAB - 白黒テクニック</div>
<div class="t mi" style="top:636.5px;color:#1c1c1c">製作</div>
<div class="t mi" style="top:656.5px;color:#1c1c1c">星の軌跡</div>
<div class="t mi" style="top:676.5px;color:#1c1c1c">テキスト効果</div>
<div class="t mi" style="top:696.5px;color:#1c1c1c">テクスチャ</div>
<div class="t mi" style="top:716.5px;color:#1c1c1c">ビデオアクション</div>
<div class="a" style="left:964px;top:739.5px;width:199px;height:1px;background:#b6b4b4"></div>
<div class="t mi" style="top:749.0px;color:#1c1c1c">閉じる</div>
<div class="t mi" style="top:769.0px;color:#1c1c1c">タブグループを閉じる</div>
<!--ENDMENU-->

</body></html>
